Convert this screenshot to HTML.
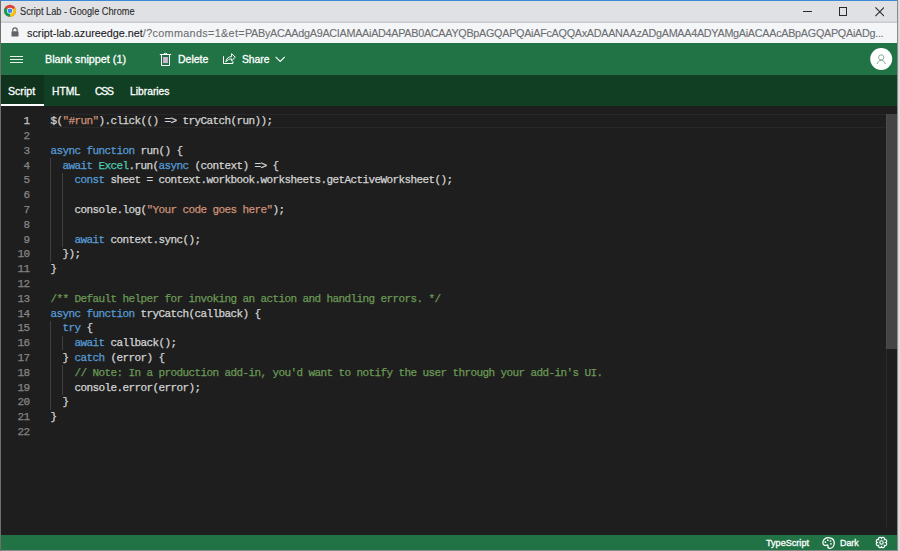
<!DOCTYPE html>
<html><head><meta charset="utf-8"><style>
*{box-sizing:border-box}
html,body{margin:0;padding:0;width:900px;height:551px;overflow:hidden;background:#1e1e1e;position:relative;font-family:"Liberation Sans",sans-serif}
.abs{position:absolute}
#topline{left:0;top:0;width:900px;height:1px;background:#3c8ad6}
#titlebar{left:0;top:1px;width:900px;height:20px;background:#dfe1e5}
#tsep{left:0;top:21px;width:900px;height:2px;background:linear-gradient(#d3d5d8 0,#d3d5d8 1px,#cacbce 1px)}
#urlbar{left:0;top:23px;width:900px;height:20px;background:#f4f5f6}
#header{left:0;top:43px;width:900px;height:32px;background:#217346}
#tabs{left:0;top:75px;width:900px;height:31px;background:#113f23}
#seltab{left:1px;top:75px;width:43px;height:31px;background:#10331d}
#selline{left:1px;top:104px;width:43px;height:2px;background:#ffffff}
#status{left:0;top:535px;width:900px;height:15px;background:#217346}
#botline{left:0;top:550px;width:900px;height:1px;background:#8a8a8a}
#lborder{left:0;top:0;width:1px;height:551px;background:#6f6f6f}
#rborder{left:897px;top:0;width:3px;height:551px;background:linear-gradient(to right,#8c8c8c 0,#8c8c8c 1px,#d4d4d4 1px,#d4d4d4 2px,#e0e0e0 2px)}
.t{position:absolute;white-space:pre;line-height:1;-webkit-text-stroke:0.3px currentColor}
.ln{position:absolute;left:50.5px;white-space:pre;font-family:"Liberation Mono",monospace;font-size:11px;letter-spacing:-0.6px;line-height:14.8px;height:14.8px;color:#d4d4d4;padding-top:0.6px;-webkit-text-stroke:0.25px currentColor}
.num{position:absolute;left:0;width:29.5px;text-align:right;font-family:"Liberation Mono",monospace;font-size:11px;letter-spacing:-0.6px;line-height:14.8px;color:#858585;padding-top:0.6px;-webkit-text-stroke:0.25px currentColor}
.num.cur{color:#c6c6c6}
.k{color:#569cd6} .s{color:#ce9178} .c{color:#6a9955} .t2{color:#4ec9b0}
.ty{color:#4ec9b0}
.guide{position:absolute;width:1px;background:#404040}
#curline{left:50px;top:113.60px;width:836px;height:14px;border:1px solid #282828;border-right:none}
#sbtrack{left:886px;top:114px;width:1px;height:413px;background:#2b2b2b}
#slider{left:886px;top:114px;width:11px;height:235px;background:rgba(121,121,121,0.42)}
</style></head><body>
<div id="topline" class="abs"></div>
<div id="titlebar" class="abs"></div>
<div id="tsep" class="abs"></div>
<div id="urlbar" class="abs"></div>
<div id="header" class="abs"></div>
<div id="tabs" class="abs"></div>
<div id="seltab" class="abs"></div>
<div id="selline" class="abs"></div>
<div id="status" class="abs"></div>
<div id="botline" class="abs"></div>

<!-- chrome icon -->
<svg class="abs" style="left:3px;top:4px" width="14" height="14" viewBox="0 0 14 14">
  <circle cx="7" cy="6.8" r="6" fill="#db4437"/>
  <path d="M7 6.8 L12.2 3.8 A6 6 0 0 1 7 12.8 Z" fill="#f4c20d"/>
  <path d="M7 6.8 L7 12.8 A6 6 0 0 1 1.8 3.8 Z" fill="#0f9d58"/>
  <circle cx="7" cy="6.8" r="3" fill="#fff"/>
  <circle cx="7" cy="6.8" r="2.4" fill="#4285f4"/>
</svg>
<div class="t" style="left:20px;top:6.6px;font-size:10px;color:#2a2a2a;-webkit-text-stroke:0.1px currentColor;transform:scaleX(0.92);transform-origin:0 0">Script Lab - Google Chrome</div>

<!-- window controls -->
<div class="abs" style="left:803px;top:11px;width:9px;height:1.4px;background:#2a2a2a"></div>
<div class="abs" style="left:838.6px;top:7.3px;width:8.6px;height:8.6px;border:1.3px solid #2a2a2a"></div>
<svg class="abs" style="left:874.5px;top:7px" width="9.5" height="9.5" viewBox="0 0 9.5 9.5"><path d="M0.4 0.4 L9.1 9.1 M9.1 0.4 L0.4 9.1" stroke="#2a2a2a" stroke-width="1.05"/></svg>

<!-- lock -->
<svg class="abs" style="left:11px;top:27px" width="8" height="10" viewBox="0 0 8 10">
  <path d="M1.8 4.5 V3 A2.2 2.2 0 0 1 6.2 3 V4.5" fill="none" stroke="#5f6368" stroke-width="1.2"/>
  <rect x="0.5" y="4.3" width="7" height="5.2" rx="0.6" fill="#5f6368"/>
</svg>
<div class="t" style="left:27px;top:28px;font-size:10.8px;color:#202124;-webkit-text-stroke:0.1px currentColor">script-lab.azureedge.net<span style="color:#6b6e72"><span style="letter-spacing:0.34px">/?commands=1&amp;et=</span><span style="letter-spacing:-0.28px">PAByACAAdgA9ACIAMAAiAD4APAB0ACAAYQBpAGQAPQAiAFcAQQAxADAANAAzADgAMAA4ADYAMgAiACAAcABpAGQAPQAiADg...</span></span></div>

<!-- header -->
<div class="abs" style="left:10px;top:56px;width:13px;height:1px;background:#e8f0ea"></div>
<div class="abs" style="left:10px;top:59px;width:13px;height:1px;background:#e8f0ea"></div>
<div class="abs" style="left:10px;top:62px;width:13px;height:1px;background:#e8f0ea"></div>
<div class="t" style="left:45px;top:54px;font-size:10.8px;color:#fff">Blank snippet (1)</div>
<svg class="abs" style="left:159px;top:52px" width="13" height="15" viewBox="0 0 13 15">
  <path d="M2.5 2.8 V13.5 H10.5 V2.8" fill="none" stroke="#fff" stroke-width="1"/>
  <path d="M0.8 2.5 H12.2 M4.3 2.4 C4.5 1 8.5 1 8.7 2.4" fill="none" stroke="#fff" stroke-width="1"/>
  <rect x="4.1" y="5" width="4.8" height="6.1" fill="#cdb9cf"/>
</svg>
<div class="t" style="left:178px;top:54px;font-size:10.5px;color:#fff">Delete</div>
<svg class="abs" style="left:222px;top:52px" width="15" height="13" viewBox="0 0 15 13">
  <path d="M1.5 4.2 V11.5 H10.9 V9.2" fill="none" stroke="#fff" stroke-width="1"/>
  <path d="M3.9 9.8 C4.2 6.6 6.4 4.6 9.6 4.6 V1.6 L13.3 5.2 L9.6 8.8 V6.9 C7.2 6.9 5.3 7.9 3.9 9.8 Z" fill="none" stroke="#fff" stroke-width="1" stroke-linejoin="miter"/>
</svg>
<div class="t" style="left:242px;top:55px;font-size:10.3px;color:#fff">Share</div>
<svg class="abs" style="left:274.5px;top:55.8px" width="11" height="7" viewBox="0 0 11 7"><path d="M0.6 0.8 L5.2 5.4 L9.8 0.8" fill="none" stroke="#fff" stroke-width="1.1"/></svg>
<svg class="abs" style="left:870px;top:48px" width="23" height="23" viewBox="0 0 23 23">
  <circle cx="11.2" cy="11" r="11" fill="#fff"/>
  <circle cx="11.2" cy="9.4" r="2.6" fill="none" stroke="#8aa898" stroke-width="1"/>
  <path d="M7.2 16 C7.5 13.6 9 12.5 11.2 12.5 C13.4 12.5 14.9 13.6 15.2 16" fill="none" stroke="#8aa898" stroke-width="1"/>
</svg>
<!-- tabs -->
<div class="t" style="left:8px;top:85.5px;font-size:10.6px;color:#fff">Script</div>
<div class="t" style="left:52px;top:86.5px;font-size:10.3px;color:#fff">HTML</div>
<div class="t" style="left:95px;top:86.5px;font-size:10.3px;letter-spacing:-1.2px;color:#fff">CSS</div>
<div class="t" style="left:130px;top:86.5px;font-size:10.3px;color:#fff">Libraries</div>

<!-- editor -->
<div id="curline" class="abs"></div>
<div class="guide" style="left:50px;top:158.00px;height:103.60px"></div><div class="guide" style="left:62px;top:172.80px;height:74.00px"></div><div class="guide" style="left:50px;top:320.80px;height:88.80px"></div><div class="guide" style="left:62px;top:335.60px;height:14.80px"></div><div class="guide" style="left:62px;top:365.20px;height:29.60px"></div>
<div class="num cur" style="top:113.60px">1</div><div class="num" style="top:128.40px">2</div><div class="num" style="top:143.20px">3</div><div class="num" style="top:158.00px">4</div><div class="num" style="top:172.80px">5</div><div class="num" style="top:187.60px">6</div><div class="num" style="top:202.40px">7</div><div class="num" style="top:217.20px">8</div><div class="num" style="top:232.00px">9</div><div class="num" style="top:246.80px">10</div><div class="num" style="top:261.60px">11</div><div class="num" style="top:276.40px">12</div><div class="num" style="top:291.20px">13</div><div class="num" style="top:306.00px">14</div><div class="num" style="top:320.80px">15</div><div class="num" style="top:335.60px">16</div><div class="num" style="top:350.40px">17</div><div class="num" style="top:365.20px">18</div><div class="num" style="top:380.00px">19</div><div class="num" style="top:394.80px">20</div><div class="num" style="top:409.60px">21</div><div class="num" style="top:424.40px">22</div>
<div class="ln" style="top:113.60px">$(<span class="s">"#run"</span>).click(() =&gt; tryCatch(run));</div><div class="ln" style="top:128.40px"></div><div class="ln" style="top:143.20px"><span class="k">async</span> <span class="k">function</span> run() {</div><div class="ln" style="top:158.00px">  <span class="k">await</span> <span class="ty">Excel</span>.run(<span class="k">async</span> (context) =&gt; {</div><div class="ln" style="top:172.80px">    <span class="k">const</span> sheet = context.workbook.worksheets.getActiveWorksheet();</div><div class="ln" style="top:187.60px"></div><div class="ln" style="top:202.40px">    console.log(<span class="s">"Your code goes here"</span>);</div><div class="ln" style="top:217.20px"></div><div class="ln" style="top:232.00px">    <span class="k">await</span> context.sync();</div><div class="ln" style="top:246.80px">  });</div><div class="ln" style="top:261.60px">}</div><div class="ln" style="top:276.40px"></div><div class="ln" style="top:291.20px"><span class="c">/** Default helper for invoking an action and handling errors. */</span></div><div class="ln" style="top:306.00px"><span class="k">async</span> <span class="k">function</span> tryCatch(callback) {</div><div class="ln" style="top:320.80px">  <span class="k">try</span> {</div><div class="ln" style="top:335.60px">    <span class="k">await</span> callback();</div><div class="ln" style="top:350.40px">  } <span class="k">catch</span> (error) {</div><div class="ln" style="top:365.20px">    <span class="c">// Note: In a production add-in, you'd want to notify the user through your add-in's UI.</span></div><div class="ln" style="top:380.00px">    console.error(error);</div><div class="ln" style="top:394.80px">  }</div><div class="ln" style="top:409.60px">}</div><div class="ln" style="top:424.40px"></div>
<div id="sbtrack" class="abs"></div>
<div id="slider" class="abs"></div>

<!-- status -->
<div class="t" style="left:766px;top:539px;font-size:9.1px;color:#fff">TypeScript</div>
<svg class="abs" style="left:821.5px;top:536.5px" width="13" height="12" viewBox="0 0 13 12">
  <path d="M2.2 8.2 C0.5 7.5 0.4 4.5 2 2.6 C3.5 0.8 6.5 0.4 8.8 1.2 C11.2 2 12.4 4.2 12.2 6.8 C12 9.3 10 11.3 7.5 11.3 C6 11.3 5.6 10.2 6 9.2 C6.3 8.3 5.6 7.8 4.8 8.1 C3.8 8.5 3 8.6 2.2 8.2 Z" fill="none" stroke="#fff" stroke-width="1.3"/>
  <circle cx="5.8" cy="3.2" r="0.85" fill="#fff"/><circle cx="8.5" cy="4" r="0.85" fill="#fff"/><circle cx="9" cy="6.8" r="0.85" fill="#fff"/><circle cx="3.4" cy="5.2" r="0.85" fill="#fff"/>
</svg>
<div class="t" style="left:840px;top:539px;font-size:8.9px;color:#fff">Dark</div>
<svg class="abs" style="left:875px;top:535.8px" width="13" height="13" viewBox="0 0 13 13">
  <path d="M10.70 6.50 L11.09 6.68 L11.28 6.88 L11.41 7.08 L11.51 7.29 L11.58 7.51 L11.61 7.73 L11.62 7.94 L11.60 8.16 L11.56 8.37 L11.49 8.57 L11.40 8.76 L11.28 8.94 L11.14 9.10 L10.98 9.25 L10.80 9.37 L10.60 9.48 L10.39 9.56 L10.14 9.61 L9.87 9.62 L9.47 9.47 L9.62 9.87 L9.61 10.14 L9.56 10.39 L9.48 10.60 L9.37 10.80 L9.25 10.98 L9.10 11.14 L8.94 11.28 L8.76 11.40 L8.57 11.49 L8.37 11.56 L8.16 11.60 L7.94 11.62 L7.73 11.61 L7.51 11.58 L7.29 11.51 L7.08 11.41 L6.88 11.28 L6.68 11.09 L6.50 10.70 L6.32 11.09 L6.12 11.28 L5.92 11.41 L5.71 11.51 L5.49 11.58 L5.27 11.61 L5.06 11.62 L4.84 11.60 L4.63 11.56 L4.43 11.49 L4.24 11.40 L4.06 11.28 L3.90 11.14 L3.75 10.98 L3.63 10.80 L3.52 10.60 L3.44 10.39 L3.39 10.14 L3.38 9.87 L3.53 9.47 L3.13 9.62 L2.86 9.61 L2.61 9.56 L2.40 9.48 L2.20 9.37 L2.02 9.25 L1.86 9.10 L1.72 8.94 L1.60 8.76 L1.51 8.57 L1.44 8.37 L1.40 8.16 L1.38 7.94 L1.39 7.73 L1.42 7.51 L1.49 7.29 L1.59 7.08 L1.72 6.88 L1.91 6.68 L2.30 6.50 L1.91 6.32 L1.72 6.12 L1.59 5.92 L1.49 5.71 L1.42 5.49 L1.39 5.27 L1.38 5.06 L1.40 4.84 L1.44 4.63 L1.51 4.43 L1.60 4.24 L1.72 4.06 L1.86 3.90 L2.02 3.75 L2.20 3.63 L2.40 3.52 L2.61 3.44 L2.86 3.39 L3.13 3.38 L3.53 3.53 L3.38 3.13 L3.39 2.86 L3.44 2.61 L3.52 2.40 L3.63 2.20 L3.75 2.02 L3.90 1.86 L4.06 1.72 L4.24 1.60 L4.43 1.51 L4.63 1.44 L4.84 1.40 L5.06 1.38 L5.27 1.39 L5.49 1.42 L5.71 1.49 L5.92 1.59 L6.12 1.72 L6.32 1.91 L6.50 2.30 L6.68 1.91 L6.88 1.72 L7.08 1.59 L7.29 1.49 L7.51 1.42 L7.73 1.39 L7.94 1.38 L8.16 1.40 L8.37 1.44 L8.57 1.51 L8.76 1.60 L8.94 1.72 L9.10 1.86 L9.25 2.02 L9.37 2.20 L9.48 2.40 L9.56 2.61 L9.61 2.86 L9.62 3.13 L9.47 3.53 L9.87 3.38 L10.14 3.39 L10.39 3.44 L10.60 3.52 L10.80 3.63 L10.98 3.75 L11.14 3.90 L11.28 4.06 L11.40 4.24 L11.49 4.43 L11.56 4.63 L11.60 4.84 L11.62 5.06 L11.61 5.27 L11.58 5.49 L11.51 5.71 L11.41 5.92 L11.28 6.12 L11.09 6.32 Z" fill="none" stroke="#fff" stroke-width="1.25"/>
  <circle cx="6.5" cy="6.5" r="1.7" fill="none" stroke="#fff" stroke-width="1.1"/>
</svg>

<div id="lborder" class="abs"></div>
<div id="rborder" class="abs"></div>
</body></html>
